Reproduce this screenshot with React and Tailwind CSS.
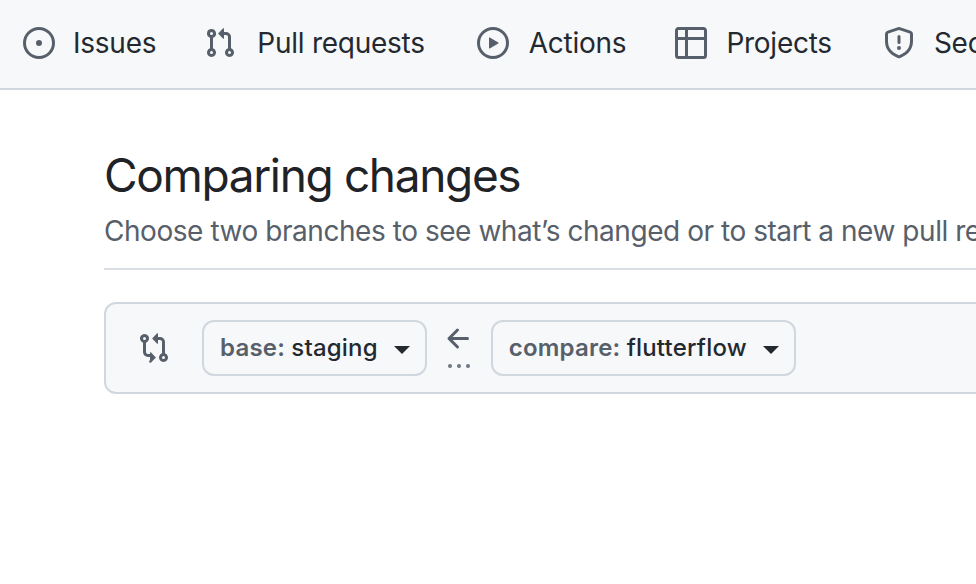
// octicons, 16px grid
const icons = {
  issue: "M8 9.5a1.5 1.5 0 1 0 0-3 1.5 1.5 0 0 0 0 3ZM8 0a8 8 0 1 1 0 16A8 8 0 0 1 8 0ZM1.5 8a6.5 6.5 0 1 0 13 0 6.5 6.5 0 0 0-13 0Z",
  pull: "M1.5 3.25a2.25 2.25 0 1 1 3 2.122v5.256a2.251 2.251 0 1 1-1.5 0V5.372A2.25 2.25 0 0 1 1.5 3.25Zm5.677-.177L9.573.677A.25.25 0 0 1 10 .854V2.5h1A2.5 2.5 0 0 1 13.5 5v5.628a2.251 2.251 0 1 1-1.5 0V5a1 1 0 0 0-1-1h-1v1.646a.25.25 0 0 1-.427.177L7.177 3.427a.25.25 0 0 1 0-.354ZM3.75 2.5a.75.75 0 1 0 0 1.5.75.75 0 0 0 0-1.5Zm0 9.5a.75.75 0 1 0 0 1.5.75.75 0 0 0 0-1.5Zm8.25.75a.75.75 0 1 0 1.5 0 .75.75 0 0 0-1.5 0Z",
  play: "M8 0a8 8 0 1 1 0 16A8 8 0 0 1 8 0ZM1.5 8a6.5 6.5 0 1 0 13 0 6.5 6.5 0 0 0-13 0Zm4.879-2.773 4.264 2.559a.25.25 0 0 1 0 .428l-4.264 2.559A.25.25 0 0 1 6 10.559V5.442a.25.25 0 0 1 .379-.215Z",
  table: "M0 1.75C0 .784.784 0 1.75 0h12.5C15.216 0 16 .784 16 1.75v12.5A1.75 1.75 0 0 1 14.25 16H1.75A1.75 1.75 0 0 1 0 14.25ZM6.5 6.5v8h7.75a.25.25 0 0 0 .25-.25V6.5Zm8-1.5V1.75a.25.25 0 0 0-.25-.25H6.5V5Zm-13 1.5v7.75c0 .138.112.25.25.25H5v-8ZM5 5V1.5H1.75a.25.25 0 0 0-.25.25V5Z",
  shield: "M8.533.133a1.75 1.75 0 0 0-1.066 0l-5.25 1.68A1.75 1.75 0 0 0 1 3.48V7c0 1.566.32 3.182 1.303 4.682.983 1.498 2.585 2.813 5.032 3.855a1.697 1.697 0 0 0 1.33 0c2.447-1.042 4.049-2.357 5.032-3.855C14.68 10.182 15 8.566 15 7V3.48a1.75 1.75 0 0 0-1.217-1.667Zm-.61 1.429a.25.25 0 0 1 .153 0l5.25 1.68a.25.25 0 0 1 .174.238V7c0 1.358-.275 2.666-1.057 3.86-.784 1.194-2.121 2.34-4.366 3.297a.196.196 0 0 1-.154 0c-2.245-.956-3.582-2.104-4.366-3.298C2.775 9.666 2.5 8.36 2.5 7V3.48a.25.25 0 0 1 .174-.238ZM9 10.5a1 1 0 1 1-2 0 1 1 0 0 1 2 0Zm-.25-5.75a.75.75 0 1 0-1.5 0v3a.75.75 0 0 0 1.5 0Z",
  compare: "M9.573.677A.25.25 0 0 1 10 .854V2.5h1A2.5 2.5 0 0 1 13.5 5v5.628a2.251 2.251 0 1 1-1.5 0V5a1 1 0 0 0-1-1h-1v1.646a.25.25 0 0 1-.427.177L7.177 3.427a.25.25 0 0 1 0-.354ZM6 12v-1.646a.25.25 0 0 1 .427-.177l2.396 2.396a.25.25 0 0 1 0 .354l-2.396 2.396A.25.25 0 0 1 6 14.146V12.5H5A2.5 2.5 0 0 1 2.5 10V5.372a2.25 2.25 0 1 1 1.5 0V10a1 1 0 0 0 1 1h1Zm6.75 0a.75.75 0 1 0 0 1.5.75.75 0 0 0 0-1.5ZM4 3.25a.75.75 0 1 0-1.5 0 .75.75 0 0 0 1.5 0Z",
  arrowLeft: "M7.78 12.53a.75.75 0 0 1-1.06 0L2.47 8.28a.75.75 0 0 1 0-1.06l4.25-4.25a.751.751 0 0 1 1.042.018.751.751 0 0 1 .018 1.042L4.81 7h7.44a.75.75 0 0 1 0 1.5H4.81l2.97 2.97a.75.75 0 0 1 0 1.06Z",
};

function Octicon({ name, className }) {
  return (
    <svg viewBox="0 0 16 16" width="32" height="32" fill="currentColor" fillRule="evenodd" className={`shrink-0 ${className}`}>
      <path d={icons[name]} />
    </svg>
  );
}

const tabs = [
  { label: "Issues", icon: "issue", cls: "gap-[18px]" },
  { label: "Pull requests", icon: "pull", cls: "gap-[21px] mr-[4px]" },
  { label: "Actions", icon: "play", cls: "gap-[20px] mr-[1px]" },
  { label: "Projects", icon: "table", cls: "gap-[19px] mr-[3px]" },
  { label: "Security", icon: "shield", cls: "gap-[19px]" },
];

function BranchButton({ prefix, name }) {
  return (
    <button className="shrink-0 h-[56px] pl-[16px] pr-[15px] flex items-center rounded-[12px] border-2 border-[#d0d7de] bg-[#f6f8fa] text-[24px] tracking-[0.2px] font-medium">
      <span>
        <span className="text-[#57606a] font-semibold">{prefix}: </span>
        <span className="text-[#24292f]">{name}</span>
      </span>
      <span className="ml-[16px] w-0 h-0 border-x-[8px] border-x-transparent border-t-[8px] border-t-[#24292f] mt-[3px]" />
    </button>
  );
}

export default function App() {
  return (
    <div className="w-[976px] h-[584px] overflow-hidden bg-white font-['Inter',sans-serif]">
      {/* repo tabs */}
      <nav className="h-[90px] bg-[#f6f8fa] border-b-2 border-[#d0d7de] pb-[2px] pl-[23px] flex items-center gap-[48px] overflow-hidden whitespace-nowrap">
        {tabs.map(({ label, icon, cls }) => (
          <div key={label} className={`shrink-0 flex items-center ${cls}`}>
            <Octicon name={icon} className="text-[#57606a]" />
            <span className="text-[28px] tracking-[-0.25px] text-[#24292f]">{label}</span>
          </div>
        ))}
      </nav>

      <main className="pl-[104px] pt-[56px]">
        <div className="w-[1000px] border-b-2 border-[#d8dee4] pb-[19px] whitespace-nowrap">
          <h2 className="text-[46px] leading-[58px] tracking-[-1.35px] font-normal text-[#1f2328]">Comparing changes</h2>
          <p className="text-[28px] leading-[36px] tracking-[-0.45px] text-[#57606a] mt-[9px]">
            Choose two branches to see what’s changed or to start a new pull request.
          </p>
        </div>

        {/* range editor */}
        <div className="mt-[32px] w-[1000px] h-[92px] rounded-[12px] border-2 border-[#d0d7de] bg-[#f6f8fa] flex items-center pl-[32px]">
          <Octicon name="compare" className="text-[#57606a]" />
          <div className="ml-[32px] flex items-center">
            <BranchButton prefix="base" name="staging" />
            <div className="w-[64px] flex flex-col items-center text-[#57606a]">
              <Octicon name="arrowLeft" />
              <div className="flex gap-[5px] mt-[9px] mb-[6px]">
                <span className="w-[4px] h-[4px] rounded-full bg-[#6e7781]" />
                <span className="w-[4px] h-[4px] rounded-full bg-[#6e7781]" />
                <span className="w-[4px] h-[4px] rounded-full bg-[#6e7781]" />
              </div>
            </div>
            <BranchButton prefix="compare" name="flutterflow" />
          </div>
        </div>
      </main>
    </div>
  );
}
